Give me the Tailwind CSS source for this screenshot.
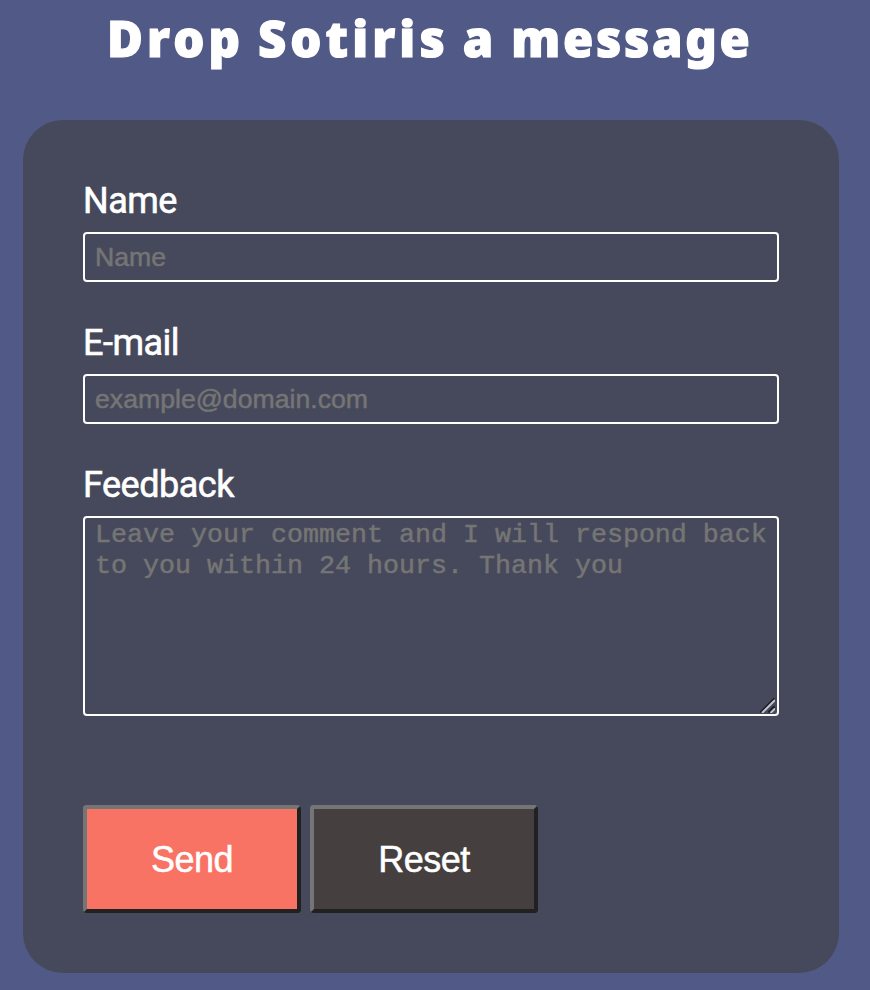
<!DOCTYPE html>
<html lang="en">
<head>
<meta charset="utf-8">
<title>Drop Sotiris a message</title>
<script src="https://cdn.jsdelivr.net/npm/@tailwindcss/browser@4"></script>
</head>
<body class="h-[990px] overflow-hidden bg-[#515a87] pl-[23px] pr-[31px] font-[Roboto,sans-serif] text-white">
  <h1 class="h-[120px] whitespace-nowrap pl-[84px] pt-[3px] font-['Noto_Sans','Open_Sans',sans-serif] text-[49px] font-black leading-[70px] tracking-[2.7px] [-webkit-text-stroke:1.2px_white]"><span class="tracking-[4.1px] [word-spacing:-3px]">Drop Sotiris </span>a message</h1>
  <form class="h-[853px] rounded-[40px] bg-[#46495b] p-[60px]">
    <div class="flex flex-col gap-10">
      <div class="flex flex-col gap-[10px]">
        <label for="name" class="text-[36px] leading-[42px] tracking-[-0.5px] [-webkit-text-stroke:0.6px_white]">Name</label>
        <input id="name" type="text" placeholder="Name" class="h-[50px] w-full rounded-[4px] border-2 border-white px-[10px] font-['Liberation_Sans',sans-serif] text-[26.67px] placeholder:text-[#757575] placeholder:[-webkit-text-stroke:0.5px_#757575]">
      </div>
      <div class="flex flex-col gap-[10px]">
        <label for="email" class="text-[36px] leading-[42px] tracking-[-0.5px] [-webkit-text-stroke:0.6px_white]">E-mail</label>
        <input id="email" type="email" placeholder="example@domain.com" class="h-[50px] w-full rounded-[4px] border-2 border-white px-[10px] font-['Liberation_Sans',sans-serif] text-[26.67px] placeholder:text-[#757575] placeholder:[-webkit-text-stroke:0.5px_#757575]">
      </div>
      <div class="flex flex-col gap-[10px]">
        <label for="feedback" class="text-[36px] leading-[42px] tracking-[-0.5px] [-webkit-text-stroke:0.6px_white]">Feedback</label>
        <div class="relative h-[200px]">
          <textarea id="feedback" placeholder="Leave your comment and I will respond back to you within 24 hours. Thank you" class="block h-full w-full resize-none rounded-[4px] border-2 border-white px-[10px] pt-[2px] pb-0 font-['Liberation_Mono',monospace] text-[26.67px] leading-[31px] placeholder:text-[#757575] placeholder:[-webkit-text-stroke:0.5px_#757575]"></textarea>
          <svg class="absolute right-[4px] bottom-[3px]" width="15" height="15" viewBox="0 0 15 15" fill="none">
            <path d="M.5 14.5L14.5 .5M8.5 14.5L14.5 8.5" stroke="#171923" stroke-width="2"/>
            <path d="M2 15L15 2M10.5 15L15 10.5" stroke="#c3c4c9" stroke-width="2"/>
          </svg>
        </div>
      </div>
    </div>
    <div class="mt-[89px] flex gap-[9px] font-['Liberation_Sans',sans-serif] text-[36px] tracking-[-0.5px]">
      <button type="submit" class="h-[108px] w-[218px] rounded-[4px] border-4 border-t-[#757575] border-r-[#212121] border-b-[#212121] border-l-[#757575] bg-[#f97364] pt-px [-webkit-text-stroke:0.5px_white]">Send</button>
      <button type="reset" class="h-[108px] w-[228px] rounded-[4px] border-4 border-t-[#757575] border-r-[#212121] border-b-[#212121] border-l-[#757575] bg-[#45403f] pt-px [-webkit-text-stroke:0.5px_white]">Reset</button>
    </div>
  </form>
</body>
</html>
